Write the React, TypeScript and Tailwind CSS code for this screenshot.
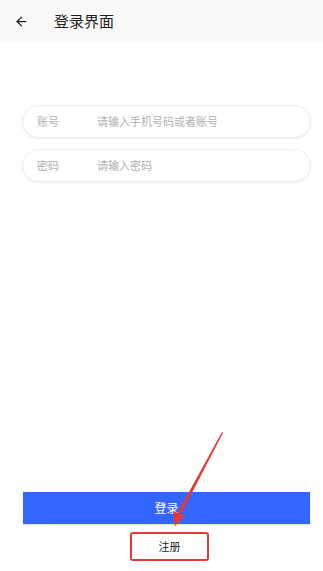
import { ArrowLeft } from "lucide-react";

const font = { fontFamily: '"Noto Sans CJK SC", "Noto Sans", sans-serif' };

function Field({ label, placeholder }: { label: string; placeholder: string }) {
  return (
    <div className="flex items-center h-[33px] rounded-full border border-[#efefef] bg-white shadow-[0_1px_2px_rgba(0,0,0,0.08)] px-[14px]">
      <span className="w-[60px] text-[11px] text-[#b0b0b0]">{label}</span>
      <input
        className="flex-1 text-[11px] text-[#333] placeholder-[#b0b0b0] outline-none bg-transparent"
        placeholder={placeholder}
        style={font}
      />
    </div>
  );
}

export default function App() {
  return (
    <div className="relative w-[323px] h-[571px] bg-white flex flex-col" style={font}>
      {/* Header */}
      <div className="h-[42px] bg-[#f9f9f9] flex items-center px-[14px]">
        <ArrowLeft size={15} strokeWidth={2} className="text-[#222]" />
        <span className="ml-[25px] text-[15px] text-[#222]">登录界面</span>
      </div>

      {/* Form */}
      <div className="flex flex-col gap-[11px] pl-[22px] pr-[12px] pt-[63px]">
        <Field label="账号" placeholder="请输入手机号码或者账号" />
        <Field label="密码" placeholder="请输入密码" />
      </div>

      <div className="flex-1" />

      {/* Actions */}
      <div className="flex flex-col items-center pl-[23px] pr-[13px] pb-[10px]">
        <button className="w-full h-[32px] bg-[#3366ff] text-white text-[12px] shadow-[0_1px_2px_rgba(0,0,0,0.15)]">
          登录
        </button>
        <div className="mt-[8px] ml-[6px] w-[79px] h-[29px] border-2 border-[#e53935] rounded-[3px] flex items-center justify-center text-[11px] text-[#222]">
          注册
        </div>
      </div>

      {/* Annotation arrow */}
      <svg className="absolute left-0 top-0 pointer-events-none" width="323" height="571">
        <polygon points="222,432 223,433 181,514 178,512" fill="#e53935" />
        <polygon points="175,526 173,511 185,516" fill="#e53935" />
      </svg>
    </div>
  );
}
